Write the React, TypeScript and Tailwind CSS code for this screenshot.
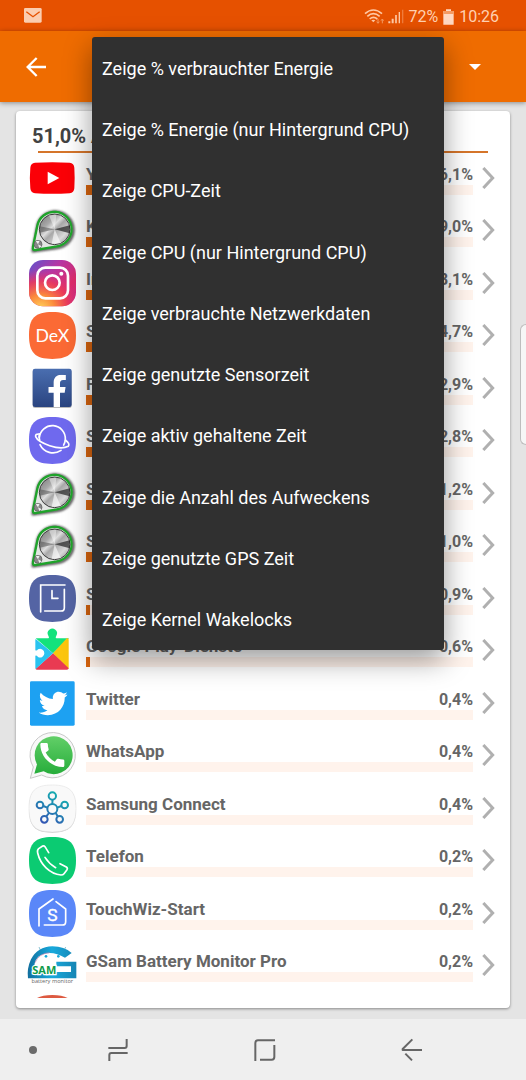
import React, { useState } from 'react';
import { FaFacebookF, FaTwitter } from 'react-icons/fa';
import { MdCall } from 'react-icons/md';

const SQUIRCLE = 'M70 0C122 0 141 19 141 70S122 141 70 141 0 122 0 70 18 0 70 0Z';

const AppIcon = ({ children }: { children: React.ReactNode }) => (
  <svg viewBox="0 0 141 141" className="w-[47px] h-[47px] shrink-0 overflow-visible" fill="none" aria-hidden="true">
    {children}
  </svg>
);

const YouTubeIcon = () => (
  <AppIcon>
    <path d="M18 23Q70 20 122 23Q135 24 136 38Q138 69 136 100Q135 114 122 115Q70 118 18 115Q5 114 4 100Q1 69 4 38Q5 24 18 23Z" fill="#fb0007" />
    <path d="M56 50L91 69L56 88Z" fill="#fff" />
  </AppIcon>
);

const SystemIcon = () => (
  <AppIcon>
    <defs>
      <linearGradient id="metal" x1="0" y1="0" x2="1" y2="1">
        <stop offset="0" stopColor="#777" />
        <stop offset=".3" stopColor="#a8a8a8" />
        <stop offset=".42" stopColor="#dedede" />
        <stop offset=".52" stopColor="#a8a8a8" />
        <stop offset=".75" stopColor="#dadada" />
        <stop offset="1" stopColor="#808080" />
      </linearGradient>
      <filter id="glow" x="-20%" y="-20%" width="140%" height="140%">
        <feGaussianBlur stdDeviation="3" />
      </filter>
    </defs>
    <path d="M12 132L26 56A54 54 0 1 1 84 122Z" stroke="#555" strokeWidth="9" strokeLinejoin="round" filter="url(#glow)" />
    <path d="M12 119L25 56A52 52 0 1 1 84 118L20 129Q10 131 12 119Z" fill="#e4e6e4" stroke="#1fa32b" strokeWidth="7" strokeLinejoin="round" />
    <circle cx="77" cy="67" r="46" fill="url(#metal)" stroke="#3c3c3c" strokeWidth="3" />
    <path d="M77 67L32 58V77Z" fill="#4a4a4a" opacity=".5" />
    <path d="M77 67L122 55V79Z" fill="#222" opacity=".7" />
    <path d="M77 67L60 25L82 23Z" fill="#fff" opacity=".45" />
    <path d="M77 67L68 111L95 108Z" fill="#fff" opacity=".6" />
    <circle cx="27" cy="112" r="12" fill="#888" stroke="#555" strokeWidth="2" />
    <path d="M27 112L20 102L32 101ZM27 112L38 118L31 123Z" fill="#eee" />
  </AppIcon>
);

const InstagramIcon = () => (
  <AppIcon>
    <defs>
      <linearGradient id="ig-base" x1="0" y1="0" x2="1" y2="1">
        <stop offset="0" stopColor="#5a55cf" />
        <stop offset=".35" stopColor="#b536a5" />
        <stop offset=".7" stopColor="#e02c6b" />
        <stop offset="1" stopColor="#cf2f8f" />
      </linearGradient>
      <radialGradient id="ig-warm" cx=".25" cy="1.05" r=".85">
        <stop offset="0" stopColor="#ffd35a" />
        <stop offset=".35" stopColor="#fb8a3c" />
        <stop offset=".7" stopColor="#ee3c55" stopOpacity=".8" />
        <stop offset="1" stopColor="#d62f80" stopOpacity="0" />
      </radialGradient>
    </defs>
    <rect width="141" height="139" rx="42" fill="url(#ig-base)" />
    <rect width="141" height="139" rx="42" fill="url(#ig-warm)" />
    <rect x="25" y="23" width="92" height="92" rx="24" stroke="#fff" strokeWidth="8" />
    <circle cx="70" cy="68" r="22" stroke="#fff" strokeWidth="8" />
    <circle cx="97" cy="41" r="6" fill="#fff" />
  </AppIcon>
);

const DexIcon = () => (
  <AppIcon>
    <path d={SQUIRCLE} fill="#fb6a35" />
    <text x="70" y="89" textAnchor="middle" fontFamily="Lato, sans-serif" fontSize="53" fill="#fff">DeX</text>
  </AppIcon>
);

const FacebookIcon = () => (
  <AppIcon>
    <defs>
      <linearGradient id="fb" x1="0" y1="0" x2="0" y2="1">
        <stop offset="0" stopColor="#4a6eb0" />
        <stop offset="1" stopColor="#2a4480" />
      </linearGradient>
    </defs>
    <rect x="11" y="14" width="117" height="115" rx="7" fill="#bbb" />
    <rect x="11" y="11" width="117" height="115" rx="7" fill="url(#fb)" />
    <FaFacebookF x="36" y="29" size={97} color="#fff" />
  </AppIcon>
);

const InternetIcon = () => (
  <AppIcon>
    <path d={SQUIRCLE} fill="#6f69ee" />
    <g stroke="#fff" strokeWidth="5" strokeLinecap="round">
      <path d="M31 62A39 39 0 0 1 109 68Q108 78 104 84" />
      <path d="M31 51Q18 50 20 59Q26 74 62 86T118 88Q124 80 109 69" />
      <path d="M33 83A43 43 0 0 0 96 100" />
      <path d="M31 51Q29 60 32 69" />
    </g>
  </AppIcon>
);

const TimerIcon = () => (
  <AppIcon>
    <path d={SQUIRCLE} fill="#5464a4" />
    <g stroke="#fff" strokeWidth="5" strokeLinecap="round">
      <path d="M35 111V30H108" />
      <path d="M106 43V98Q106 108 96 108H47" />
      <path d="M69 47V70H87" />
    </g>
  </AppIcon>
);

const PlayServicesIcon = () => (
  <AppIcon>
    <path d="M20 34H120L72 79Z" fill="#13e27c" />
    <path d="M58 36Q62 30 58 26A14 14 0 1 1 82 26Q78 30 82 36Z" fill="#13e27c" />
    <path d="M114 33Q119 33 119 38V122Q119 127 117 126L72 79Z" fill="#fbc50d" />
    <path d="M72 79L119 124Q118 128 114 128H24Q20 128 20 125Z" fill="#e93a52" />
    <path d="M20 36L72 79L20 126Q19 125 19 122V86Q24 84 27 90A13 13 0 1 0 27 67Q24 72 19 70V38Z" fill="#29c3f0" />
  </AppIcon>
);

const TwitterIcon = () => (
  <AppIcon>
    <rect x="3" y="4" width="134" height="133" rx="4" fill="#1da1f2" />
    <FaTwitter x="29" y="27" size={87} color="#fff" />
  </AppIcon>
);

const WhatsAppIcon = () => (
  <AppIcon>
    <defs>
      <linearGradient id="wa" x1="0" y1="0" x2="0" y2="1">
        <stop offset="0" stopColor="#62cf68" />
        <stop offset="1" stopColor="#27ad3b" />
      </linearGradient>
    </defs>
    <path d="M4 139L13 105A68 68 0 1 1 38 129Z" fill="#f8f8f8" stroke="#c9c9c9" strokeWidth="3" strokeLinejoin="round" />
    <path d="M16 125L24 97A57 57 0 1 1 44 118Z" fill="url(#wa)" />
    <MdCall x="22" y="21" size={96} color="#fff" />
  </AppIcon>
);

const ConnectIcon = () => (
  <AppIcon>
    <defs>
      <linearGradient id="sc" gradientUnits="userSpaceOnUse" x1="40" y1="115" x2="90" y2="30">
        <stop offset="0" stopColor="#3454b4" />
        <stop offset="1" stopColor="#16abb0" />
      </linearGradient>
    </defs>
    <path d={SQUIRCLE} fill="#c4c4c4" transform="translate(0 2)" />
    <path d={SQUIRCLE} fill="#f9f9f9" stroke="#e4e4e4" strokeWidth="2" />
    <g stroke="url(#sc)" strokeWidth="6">
      <circle cx="70" cy="72" r="15" />
      <circle cx="70" cy="33" r="11" />
      <circle cx="33" cy="60" r="10" />
      <circle cx="107" cy="60" r="10" />
      <circle cx="46" cy="103" r="10" />
      <circle cx="92" cy="103" r="10" />
      <path d="M70.500 44L70 57M43 63L55 68M97 63L85 68M52 94L60 84M86 94L80 84" />
    </g>
  </AppIcon>
);

const PhoneIcon = () => (
  <AppIcon>
    <path d={SQUIRCLE} fill="#0bcb72" />
    <g stroke="#fff" strokeWidth="5" strokeLinecap="round" strokeLinejoin="round">
      <path d="M59 47L48 29Q45 25 41 27L29 35Q24 39 26 48C34 82 62 111 96 114Q102 114 105 110L114 98Q117 93 112 90L93 80" />
      <path d="M48 61Q60 80 80 92" />
    </g>
  </AppIcon>
);

const HomeIcon = () => (
  <AppIcon>
    <path d={SQUIRCLE} fill="#5a87f8" />
    <g stroke="#fff" strokeWidth="5" strokeLinecap="round" strokeLinejoin="round">
      <path d="M30 108V57L72 27" />
      <path d="M81 35L110 57V95Q110 105 100 105H46" />
    </g>
    <text x="70" y="92" textAnchor="middle" fontFamily="Roboto, sans-serif" fontSize="52" fill="#fff" stroke="#fff" strokeWidth="1">S</text>
  </AppIcon>
);

const GSamIcon = () => (
  <AppIcon>
    <defs>
      <linearGradient id="gs" x1="0" y1="0" x2="1" y2="0">
        <stop offset="0" stopColor="#126f9e" />
        <stop offset=".5" stopColor="#18a9dc" />
        <stop offset="1" stopColor="#1685b4" />
      </linearGradient>
    </defs>
    <path d="M34 24L30 15M106 24L110 15" stroke="#8cc4d4" strokeWidth="3" />
    <path d="M-3 109H142V59H82V73H126V90H20Q10 62 28 44Q62 20 108 47L128 33Q106 13 70 13Q26 14 6 52Q-7 80 -3 109Z" fill="url(#gs)" />
    <path d="M18 62Q30 34 62 32" stroke="#c77bab" strokeWidth="2" />
    <circle cx="51" cy="43" r="4" fill="#18a9dc" />
    <circle cx="88" cy="43" r="4" fill="#18a9dc" />
    <text x="46" y="97" textAnchor="middle" fontFamily="Open Sans, sans-serif" fontSize="33" fontWeight="700" fill="#0f9b4a" stroke="#fff" strokeWidth="7" paintOrder="stroke">SAM</text>
    <text x="70" y="124" textAnchor="middle" fontFamily="Open Sans, sans-serif" fontSize="17" fill="#666">battery monitor</text>
  </AppIcon>
);

const RedIcon = () => (
  <AppIcon>
    <path d={SQUIRCLE} fill="#dd5a41" />
  </AppIcon>
);

const menuItems = [
  'Zeige % verbrauchter Energie',
  'Zeige % Energie (nur Hintergrund CPU)',
  'Zeige CPU-Zeit',
  'Zeige CPU (nur Hintergrund CPU)',
  'Zeige verbrauchte Netzwerkdaten',
  'Zeige genutzte Sensorzeit',
  'Zeige aktiv gehaltene Zeit',
  'Zeige die Anzahl des Aufweckens',
  'Zeige genutzte GPS Zeit',
  'Zeige Kernel Wakelocks',
];

const apps = [
  { name: 'YouTube', value: 16.1, icon: YouTubeIcon },
  { name: 'Kernel', value: 9.0, icon: SystemIcon },
  { name: 'Instagram', value: 8.1, icon: InstagramIcon },
  { name: 'Samsung DeX', value: 4.7, icon: DexIcon },
  { name: 'Facebook', value: 2.9, icon: FacebookIcon },
  { name: 'Samsung Internet', value: 2.8, icon: InternetIcon },
  { name: 'System', value: 1.2, icon: SystemIcon },
  { name: 'System', value: 1.0, icon: SystemIcon },
  { name: 'S', value: 0.9, icon: TimerIcon },
  { name: 'Google Play-Dienste', value: 0.6, icon: PlayServicesIcon },
  { name: 'Twitter', value: 0.4, icon: TwitterIcon },
  { name: 'WhatsApp', value: 0.4, icon: WhatsAppIcon },
  { name: 'Samsung Connect', value: 0.4, icon: ConnectIcon },
  { name: 'Telefon', value: 0.2, icon: PhoneIcon },
  { name: 'TouchWiz-Start', value: 0.2, icon: HomeIcon },
  { name: 'GSam Battery Monitor Pro', value: 0.2, icon: GSamIcon },
  { name: '', value: 0, icon: RedIcon },
];

const formatPercent = (value: number) => `${value.toFixed(1).replace('.', ',')}%`;

const barWidth = (value: number) => (value < 1 ? `${Math.round(value)}%` : `${value * 2}%`);

const StatusBar = () => (
  <div className="h-[31px] shrink-0 bg-[#e65100] flex items-center justify-between pl-6 pr-[27px] text-[#ffd0b0]">
    <svg viewBox="0 0 54 45" className="w-[18px] h-[15px]" aria-hidden="true">
      <rect width="53" height="44" rx="4" fill="#fbcdb0" />
      <path d="M7 11L27 26L47 11" fill="none" stroke="#e65100" strokeWidth="4" />
    </svg>
    <div className="flex items-center pt-[2px] text-base leading-5">
      <svg viewBox="0 0 120 48" className="w-10 h-4 mr-1" fill="none" aria-hidden="true">
        <g stroke="#ffc9a5" strokeWidth="5">
          <path d="M3 14Q28 -8 54 14" />
          <path d="M10 22Q28 6 47 22" />
          <path d="M17 30Q28 20 40 30" />
        </g>
        <path d="M22 34Q28 30 34 34L28 40Z" fill="#ffc9a5" />
        <path d="M42 30V42M38 38L42 43L46 38M55 43V31M51 35L55 30L59 35" stroke="#f59a62" strokeWidth="3" />
        <path d="M76 43V37M86 43V29" stroke="#ffc9a5" strokeWidth="6" />
        <path d="M96 43V18" stroke="#ffc9a5" strokeWidth="5" />
        <path d="M106 43V9" stroke="#ffc9a5" strokeWidth="4" />
        <path d="M116 43V2" stroke="#f07c3c" strokeWidth="4" />
      </svg>
      <span>72%</span>
      <svg viewBox="0 0 33 48" className="w-[11px] h-4 mx-[5px]" aria-hidden="true">
        <path d="M9 1H24V6H32V47H1V6H9Z" fill="#ffd8c2" />
        <path d="M1 6H32V15H1Z" fill="#f59a62" />
      </svg>
      <span>10:26</span>
    </div>
  </div>
);

const NavBar = () => (
  <nav className="h-[61px] shrink-0 bg-[#efefef] flex items-center text-[#666]">
    <div className="w-11 flex justify-end pr-[7px]">
      <span className="w-2 h-2 rounded-full bg-[#6b6b6b]" />
    </div>
    <div className="flex-1 grid grid-cols-3 mr-10">
      <button type="button" aria-label="Letzte Apps" className="flex justify-center">
        <svg viewBox="0 0 66 72" className="w-[22px] h-6" fill="none" stroke="currentColor" strokeWidth="6" strokeLinejoin="round">
          <path d="M4 30H53Q59 30 59 24V3" />
          <path d="M7 69V51Q7 45 13 45H62" />
        </svg>
      </button>
      <button type="button" aria-label="Startseite" className="flex justify-center">
        <svg viewBox="0 0 66 72" className="w-[22px] h-6" fill="none" stroke="currentColor" strokeWidth="6">
          <path d="M4 69V15Q4 7 12 7H63" />
          <path d="M61 21V57Q61 65 53 65H18" />
        </svg>
      </button>
      <button type="button" aria-label="Zurück" className="flex justify-center">
        <svg viewBox="0 0 66 72" className="w-[22px] h-6" fill="none" stroke="currentColor" strokeWidth="6" strokeLinejoin="round">
          <path d="M34 4L5 33V36H63" />
          <path d="M13 47L33 67" />
        </svg>
      </button>
    </div>
  </nav>
);

const App = () => {
  const [menuOpen, setMenuOpen] = useState(true);

  return (
    <div className="relative h-screen flex flex-col overflow-hidden bg-[#e4e4e4] font-[Roboto,sans-serif]">
      <StatusBar />

      <header className="h-[71px] shrink-0 bg-[#ef6c00] shadow-[0_1px_5px_rgba(0,0,0,0.4)] flex items-center justify-between pl-[26px] pr-[45px]">
        <button type="button" aria-label="Zurück">
          <svg viewBox="0 0 60 60" className="w-5 h-5" fill="none" stroke="#fff" strokeWidth="7">
            <path d="M60 30H5M32 3L5 30L32 57" />
          </svg>
        </button>
        <button type="button" aria-label="Ansicht wählen" onClick={() => setMenuOpen(!menuOpen)} className="flex">
          <svg viewBox="0 0 36 18" className="w-3 h-[6px]">
            <path d="M0 0H36L18 18Z" fill="#fff" />
          </svg>
        </button>
      </header>

      <main className="flex-1 min-h-0 flex flex-col mt-[9px] mb-[11px] mx-4 pb-[10px] bg-white rounded shadow-[0_1px_3px_rgba(0,0,0,0.4)]">
        <h1 className="shrink-0 mx-[22px] h-[42px] border-b-2 border-[#d5752a] flex items-center pt-[10px]">
          <span className="-ml-[6px] text-xl leading-6 font-bold text-[#424242]">51,0% Apps</span>
        </h1>

        <ul className="flex-1 min-h-0 overflow-hidden pl-[13px] pr-[15px]">
          {apps.map((app, i) => (
            <li key={i} className="flex items-start odd:h-[52px] even:h-[53px]">
              <div className="pt-[2px]">
                <app.icon />
              </div>
              {app.name && (
                <>
                  <div className="flex-1 min-w-0 pt-[11px] ml-[10px] mr-[9px]">
                    <div className="flex justify-between items-baseline font-bold text-[#666]">
                      <span className="text-[17px] leading-5">{app.name}</span>
                      <span className="text-base leading-5">{formatPercent(app.value)}</span>
                    </div>
                    <div className="h-[10px] bg-[#fff3ec]">
                      <div className="h-full bg-[#d9650f]" style={{ width: barWidth(app.value) }} />
                    </div>
                  </div>
                  <button type="button" aria-label={`${app.name} Details`} className="pt-[14px]">
                    <svg viewBox="0 0 39 66" className="w-[13px] h-[22px]" fill="none" stroke="#b0b0b0" strokeWidth="9">
                      <path d="M4 3L32 33L4 63" />
                    </svg>
                  </button>
                </>
              )}
            </li>
          ))}
        </ul>
      </main>

      <NavBar />

      {/* edge panel handle */}
      <div className="absolute right-0 top-[324px] w-[6px] h-[121px] rounded-l-md border border-r-0 border-[#bdbdbd] bg-[#f6f6f6]" />

      {menuOpen && (
        <div role="menu" className="absolute top-[37px] left-[92px] right-[82px] h-[613px] grid auto-rows-fr rounded-[3px] bg-[#303030] shadow-[0_10px_28px_rgba(0,0,0,0.4)]">
          {menuItems.map(item => (
            <button
              key={item}
              type="button"
              role="menuitem"
              onClick={() => setMenuOpen(false)}
              className="px-[10px] pt-[2px] text-left text-lg leading-6 text-white whitespace-nowrap"
            >
              {item}
            </button>
          ))}
        </div>
      )}
    </div>
  );
};

export default App;
